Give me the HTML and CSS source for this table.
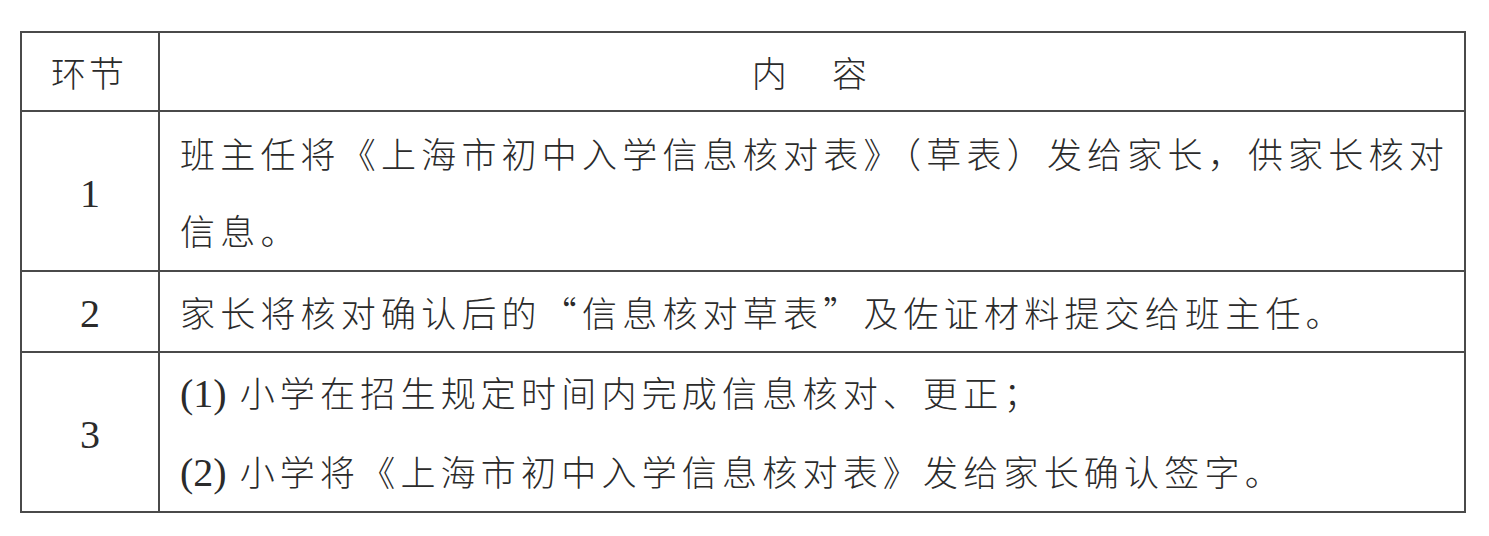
FILE: index.html
```html
<!DOCTYPE html>
<html lang="zh-CN">
<head>
<meta charset="utf-8">
<title>信息核对流程</title>
<link rel="stylesheet" href="styles.css">
</head>
<body>
<div class="page">
  <table class="flow">
    <colgroup>
      <col class="col-step">
      <col class="col-content">
    </colgroup>
    <tr class="row-head">
      <th class="step head-step">环节</th>
      <th class="content head-content">内　容</th>
    </tr>
    <tr class="row-1">
      <td class="step"><span class="num">1</span></td>
      <td class="content">班主任将《上海市初中入学信息核对表》（草表）发给家长，供家长核对<br>信息。</td>
    </tr>
    <tr class="row-2">
      <td class="step"><span class="num">2</span></td>
      <td class="content">家长将核对确认后的“信息核对草表”及佐证材料提交给班主任。</td>
    </tr>
    <tr class="row-3">
      <td class="step"><span class="num">3</span></td>
      <td class="content"><span class="num small">(1)</span>小学在招生规定时间内完成信息核对、更正；<br><span class="num small">(2)</span>小学将《上海市初中入学信息核对表》发给家长确认签字。</td>
    </tr>
  </table>
</div>
</body>
</html>
```

FILE: styles.css
```css
html, body {
  margin: 0;
  padding: 0;
  background: #ffffff;
}

body {
  font-family: "Noto Sans CJK SC", "Noto Sans", sans-serif;
  color: #2b2b2b;
}

.page {
  padding: 31px 0 0 20px;
}

.flow {
  border-collapse: collapse;
  width: 1446px;
  table-layout: fixed;
  border: 2px solid #4a4a4a;
}

.col-step {
  width: 138px;
}

.flow th,
.flow td {
  border: 2px solid #4a4a4a;
  padding: 0;
  font-weight: 300;
  font-size: 35px;
  letter-spacing: 5.2px;
  vertical-align: middle;
}

.step {
  text-align: center;
}

.content {
  text-align: left;
  padding-left: 20px !important;
  line-height: 77px;
}

.head-step {
  font-size: 35px !important;
  letter-spacing: 3px !important;
  padding-right: 2px !important;
}

.head-content {
  text-align: center;
  padding-left: 0 !important;
}

.row-head th {
  height: 77px;
}

.row-1 td {
  height: 158px;
}

.row-2 td {
  height: 79px;
}

.row-3 td {
  height: 156px;
}

.num {
  font-family: "Liberation Serif", "Times New Roman", serif;
  font-size: 40px;
  letter-spacing: 0;
  color: #2b2b2b;
}

.num.small {
  margin-right: 13px;
}
```
